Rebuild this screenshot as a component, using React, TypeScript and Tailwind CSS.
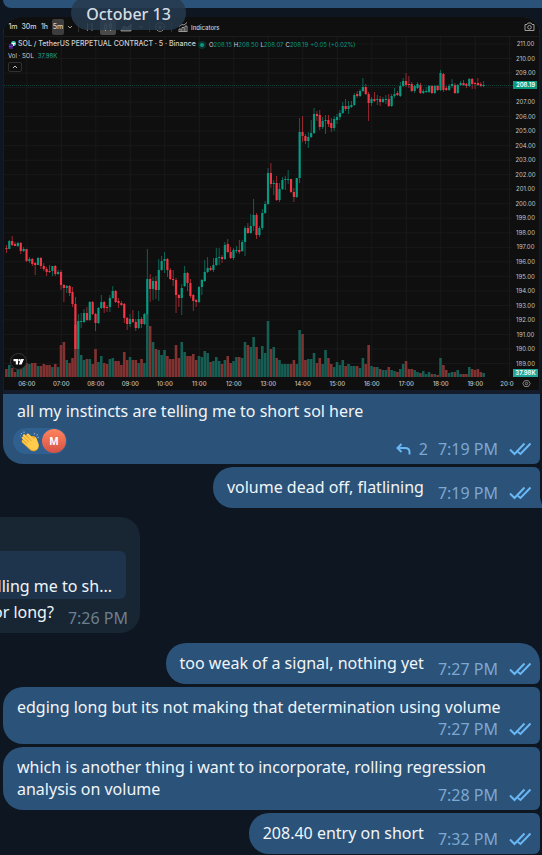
import type { ReactNode } from "react";

// Each candle: open, close, high, low (vertical chart coordinates), volume height.
type Candle = [number, number, number, number, number];

const CANDLES: Candle[] = [
  [248, 249, 245, 253, 8], [249, 241, 240, 249, 12], [241, 245, 236, 246, 9], [244, 246, 242, 246, 5],
  [246, 243, 242, 247, 8], [243, 251, 242, 254, 11], [251, 249, 247, 252, 12], [249, 261, 249, 262, 14],
  [261, 259, 257, 263, 13], [259, 264, 258, 266, 14], [263, 265, 262, 275, 14], [265, 258, 257, 265, 11],
  [258, 266, 257, 269, 11], [266, 269, 263, 271, 13], [269, 272, 267, 276, 12], [271, 272, 265, 273, 12],
  [271, 266, 266, 276, 10], [266, 274, 265, 276, 13], [274, 272, 270, 275, 10], [272, 285, 270, 290, 32],
  [285, 288, 284, 302, 35], [288, 286, 285, 293, 17], [286, 293, 285, 296, 14], [292, 304, 287, 307, 19],
  [304, 349, 297, 349, 52], [349, 321, 314, 349, 28], [322, 321, 313, 328, 22], [322, 313, 309, 323, 17],
  [313, 320, 307, 321, 18], [320, 302, 301, 321, 18], [302, 314, 301, 315, 13], [314, 323, 313, 331, 28],
  [323, 308, 307, 324, 15], [308, 302, 295, 309, 21], [302, 308, 301, 313, 14], [307, 308, 305, 312, 13],
  [307, 298, 295, 312, 18], [298, 291, 286, 299, 19], [291, 302, 290, 303, 16], [301, 303, 298, 308, 16],
  [303, 305, 301, 306, 12], [304, 318, 303, 323, 25], [318, 324, 317, 330, 17], [324, 319, 314, 327, 20],
  [319, 322, 310, 323, 17], [322, 328, 319, 331, 17], [328, 319, 311, 329, 14], [319, 324, 317, 328, 18],
  [324, 314, 313, 325, 14], [314, 279, 249, 315, 63], [279, 289, 274, 302, 51], [289, 281, 277, 300, 35],
  [281, 290, 276, 299, 28], [290, 270, 259, 301, 27], [270, 261, 256, 271, 22], [261, 259, 252, 273, 27],
  [259, 270, 258, 277, 21], [270, 279, 268, 280, 18], [279, 280, 270, 286, 18], [280, 295, 278, 313, 32],
  [295, 298, 294, 307, 19], [298, 288, 284, 315, 35], [286, 273, 266, 287, 25], [273, 283, 272, 291, 21],
  [283, 296, 279, 298, 21], [295, 301, 294, 311, 23], [300, 302, 299, 307, 17], [302, 287, 286, 303, 21],
  [287, 280, 279, 295, 20], [281, 272, 260, 282, 26], [272, 268, 257, 273, 24], [268, 270, 266, 271, 15],
  [270, 265, 258, 272, 16], [265, 258, 248, 266, 20], [258, 257, 248, 265, 16], [257, 259, 255, 263, 13],
  [259, 245, 242, 260, 17], [244, 252, 239, 253, 21], [252, 258, 247, 259, 14], [258, 250, 248, 260, 16],
  [251, 250, 246, 253, 20], [250, 252, 240, 254, 20], [251, 242, 240, 252, 19], [242, 228, 226, 256, 35],
  [228, 233, 223, 234, 32], [233, 226, 214, 234, 30], [226, 215, 199, 231, 40], [215, 235, 213, 239, 30],
  [235, 228, 226, 237, 18], [228, 213, 209, 230, 31], [213, 204, 201, 214, 24], [204, 173, 168, 205, 56],
  [173, 184, 163, 188, 28], [184, 183, 180, 195, 30], [183, 200, 176, 201, 19], [200, 189, 183, 202, 17],
  [189, 180, 177, 190, 13], [180, 179, 176, 190, 13], [180, 179, 170, 184, 13], [179, 192, 179, 193, 13],
  [192, 197, 188, 202, 17], [197, 178, 178, 198, 13], [178, 132, 118, 183, 47], [132, 136, 116, 142, 43],
  [136, 141, 134, 144, 17], [141, 137, 132, 148, 18], [137, 133, 120, 138, 18], [133, 114, 108, 134, 24],
  [114, 116, 111, 121, 14], [115, 127, 110, 130, 19], [127, 121, 117, 129, 13], [121, 120, 115, 134, 27],
  [120, 124, 115, 127, 19], [123, 128, 118, 132, 13], [128, 119, 116, 131, 10], [120, 117, 114, 124, 15],
  [117, 113, 110, 120, 12], [113, 106, 102, 114, 17], [106, 109, 99, 111, 11], [109, 106, 101, 114, 13],
  [107, 105, 101, 108, 11], [105, 95, 93, 106, 11], [94, 96, 91, 98, 11], [96, 91, 89, 97, 9],
  [91, 87, 78, 92, 19], [87, 94, 84, 95, 13], [94, 103, 92, 121, 32], [103, 99, 97, 106, 11],
  [99, 101, 92, 102, 10], [100, 99, 95, 105, 10], [99, 102, 96, 106, 8], [102, 99, 97, 103, 7],
  [100, 99, 95, 104, 7], [99, 106, 94, 107, 10], [106, 96, 94, 107, 7], [96, 94, 88, 98, 6],
  [93, 95, 91, 96, 5], [96, 86, 82, 97, 8], [86, 81, 78, 87, 13], [81, 85, 73, 87, 16],
  [84, 85, 76, 88, 8], [84, 91, 82, 92, 8], [91, 86, 85, 93, 7], [88, 84, 82, 89, 5],
  [85, 93, 83, 94, 4], [93, 91, 89, 94, 6], [92, 91, 87, 93, 3], [92, 86, 85, 93, 5],
  [86, 93, 85, 94, 3], [93, 86, 85, 94, 3], [86, 90, 85, 91, 2], [90, 73, 70, 91, 19],
  [74, 90, 73, 92, 12], [88, 90, 86, 91, 7], [90, 86, 84, 91, 4], [86, 84, 79, 88, 5],
  [85, 93, 83, 94, 5], [93, 85, 84, 94, 7], [85, 83, 81, 86, 3], [83, 85, 80, 86, 3],
  [84, 86, 83, 88, 3], [86, 79, 78, 87, 10], [79, 84, 78, 89, 8], [83, 84, 82, 89, 7],
  [83, 85, 78, 86, 8], [84, 86, 82, 87, 5], [86, 85, 81, 87, 4],
];

const HOURS = ["06:00", "07:00", "08:00", "09:00", "10:00", "11:00", "12:00", "13:00", "14:00", "15:00", "16:00", "17:00", "18:00", "19:00"];
const PRICES = Array.from({ length: 23 }, (_, i) => 211 - i);
const BASE = 377;

function Chart() {
  return (
    <svg viewBox="4 36 535 354" className="block w-full" role="img" aria-label="SOL perpetual price chart">
      <rect x="4" y="36" width="535" height="354" fill="#0f0f0f" />
      <g stroke="#191919" strokeWidth="1">
        <path d="M4 36.5H539" stroke="#1c1c1c" />
        {PRICES.map((p, i) => <path key={p} d={`M4 ${44 + i * 14.52}H512`} />)}
        {HOURS.map((h, i) => <path key={h} d={`M${26.8 + i * 34.5} 37V377`} />)}
        <path d="M509.5 37V377" />
      </g>
      {CANDLES.map(([open, close, high, low, vol], i) => {
        const x = 6.4 + i * 2.875;
        const up = close < open;
        return (
          <g key={i}>
            <rect x={x - 1.3} y={BASE - vol} width="2.6" height={vol} fill={up ? "#165e54" : "#833232"} />
            <rect x={x - 0.4} y={high} width="0.8" height={low - high} fill={up ? "#089981" : "#f23645"} opacity="0.75" />
            <rect x={x - 1.1} y={Math.min(open, close)} width="2.2" height={Math.abs(close - open)} fill={up ? "#089981" : "#f23645"} />
          </g>
        );
      })}
      <path d="M4 85.5H513" stroke="#089981" strokeWidth="1" strokeDasharray="1 1" opacity="0.35" />
      <g fill="#c2c2c2" fontSize="6" fontFamily="Inter, 'Liberation Sans', sans-serif" textAnchor="middle">
        {PRICES.map((p, i) => (p === 208 ? null : <text key={p} x="525.5" y={46.2 + i * 14.52}>{p}.00</text>))}
        <g fontWeight="500">
          {HOURS.map((h, i) => <text key={h} x={26.8 + i * 34.5} y="385.5">{h}</text>)}
          <text x="507" y="385.5">20:0</text>
        </g>
        <rect x="513" y="81" width="24" height="8" fill="#089981" />
        <text x="525.5" y="87.3" fill="#fff" fontWeight="600">208.19</text>
        <rect x="513" y="369" width="25" height="8" fill="#22a699" />
        <text x="525.5" y="375.2" fill="#fff" fontWeight="600">37.98K</text>
      </g>
      <g fill="none" stroke="#a0a0a0" strokeWidth="0.8">
        <path d="M524.6 380.7H528.4L530.2 383.5L528.4 386.5H524.6L522.8 383.5Z" />
        <circle cx="526.5" cy="383.6" r="1.2" />
      </g>
      <circle cx="18.5" cy="361.5" r="8" fill="#0f0f0f" stroke="#383838" />
      <path d="M13.5 359H18V364.5H15.8V361.2H13.5ZM20.8 359H24L21.6 364.5H18.8Z" fill="#fff" />
      <circle cx="19.4" cy="360.2" r="1.1" fill="#fff" />
    </svg>
  );
}

function Toolbar() {
  return (
    <div className="flex h-[19px] items-center bg-[#0f0f0f] pl-[3px] pr-[4px] pt-px font-['Inter','Liberation_Sans',sans-serif] text-[7px] font-medium text-[#d0d0d0]">
      <button className="w-[12px]">1m</button>
      <button className="ml-[2px] w-[16px]">30m</button>
      <button className="ml-[2px] w-[11px]">1h</button>
      <button className="ml-[2px] h-[16px] w-[12px] rounded-[2px] bg-[#3d3d3d]">5m</button>
      <button aria-label="More intervals" className="ml-[3px]">
        <svg width="6" height="6" viewBox="0 0 6 6" fill="none" stroke="#a0a0a0"><path d="M1 2L3 4L5 2" /></svg>
      </button>
      <span className="ml-[5px] h-[10px] w-px bg-[#303030]" />
      <button aria-label="Bars" className="ml-[6px]">
        <svg width="10" height="10" viewBox="0 0 10 10" fill="none" stroke="#808080"><path d="M2.5 1V9M1 7H2.5M2.5 3H4M7 1V9M5.5 3H7M7 7H8.500" /></svg>
      </button>
      <button aria-label="Candles" className="ml-[5px] flex h-[15px] w-[16px] items-center justify-center rounded-[2px] bg-[#4a4a4a]">
        <svg width="10" height="10" viewBox="0 0 10 10" fill="none" stroke="#a0a0a0"><path d="M1.500 3H3.500V7H1.500ZM2.500 1V3M2.500 7V9M6.500 2H8.500V6H6.500ZM7.500 0V2M7.500 6V9" /></svg>
      </button>
      <button aria-label="Area" className="ml-[4px]">
        <svg width="12" height="10" viewBox="0 0 12 10" fill="#666" stroke="#888"><path d="M1 8L4 4L7 6L11 2V9H1Z" /></svg>
      </button>
      <button aria-label="More styles" className="ml-[6px]">
        <svg width="6" height="6" viewBox="0 0 6 6" fill="none" stroke="#808080"><path d="M1 2L3 4L5 2" /></svg>
      </button>
      <span className="ml-[5px] h-[10px] w-px bg-[#303030]" />
      <button aria-label="Compare" className="ml-[5px]">
        <svg width="10" height="10" viewBox="0 0 10 10" fill="none" stroke="#999" strokeWidth="0.8"><circle cx="5" cy="5" r="4.400" /><path d="M5 2.500V7.500M2.500 5H7.500" /></svg>
      </button>
      <span className="ml-[6px] h-[10px] w-px bg-[#303030]" />
      <button className="ml-[6px] flex items-center gap-[3px]">
        <svg width="10" height="10" viewBox="0 0 10 10" fill="none" stroke="#bbb" strokeWidth="0.8"><path d="M1 9V7H3V9M4 9V5.500H6V9M7 9V4H9V9M0.500 9.500H9.500M1 4.500L4 2.500L6 3L9 0.500" /></svg>
        <span className="text-[6px]">Indicators</span>
      </button>
      <button aria-label="Take a snapshot" className="ml-auto">
        <svg width="11" height="10" viewBox="0 0 11 10" fill="none" stroke="#aaa" strokeWidth="0.9"><path d="M1 2.500H3L4 1H7L8 2.500H10V8.500H1Z" /><circle cx="5.500" cy="5.300" r="1.800" /></svg>
      </button>
    </div>
  );
}

function Legend() {
  return (
    <div className="absolute left-[5px] top-[23px] font-['Inter','Liberation_Sans',sans-serif] text-[#d0d0d0]">
      <div className="flex h-[9px] items-center whitespace-nowrap text-[6px]">
        <svg width="8" height="8" viewBox="0 0 8 8"><circle cx="5.500" cy="2.500" r="2.500" fill="#4fd1c5" /><path d="M4 2H7V3H6V5H5V3H4Z" fill="#fff" /><circle cx="2.800" cy="5.300" r="2.500" fill="#18103a" /><path d="M1 4H5M1 5.500H5M1 7H5" stroke="#9945ff" strokeWidth="0.7" /></svg>
        <span className="ml-[2px] text-[7px] font-medium">SOL / TetherUS PERPETUAL CONTRACT · 5 · Binance</span>
        <span className="ml-[2px] flex size-[8px] items-center justify-center rounded-full bg-[#0b332c]"><span className="size-[4px] rounded-full bg-[#089981]" /></span>
        <span className="ml-[3px]">O<span className="text-[#089981]">208.15</span></span>
        <span className="ml-[2px]">H<span className="text-[#089981]">208.50</span></span>
        <span className="ml-[2px]">L<span className="text-[#089981]">208.07</span></span>
        <span className="ml-[2px]">C<span className="text-[#089981]">208.19</span></span>
        <span className="ml-[2px] text-[#089981]">+0.05 (+0.02%)</span>
      </div>
      <div className="mt-[2px] flex h-[8px] items-center gap-[4px] text-[6px]">
        Vol · SOL <span className="text-[#22a699]">37.98K</span>
      </div>
      <button aria-label="Collapse legend" className="mt-[3px] flex h-[10px] w-[14px] items-center justify-center rounded-[2px] border border-[#303030]">
        <svg width="6" height="6" viewBox="0 0 6 6" fill="none" stroke="#c0c0c0"><path d="M1 4L3 2L5 4" /></svg>
      </button>
    </div>
  );
}

function Checks() {
  return (
    <svg width="22" height="14" viewBox="0 0 22 14" fill="none" stroke="#6ab7f5" strokeWidth="2" aria-label="Read">
      <path d="M1 7.500L5.500 12L15.500 1.500M9 10L11.500 12L21.500 1.500" />
    </svg>
  );
}

function Meta({ time, replies }: { time: string; replies?: number }) {
  return (
    <span className="ml-auto flex shrink-0 items-center pb-1 leading-[22px] text-[#7da8d3]">
      {replies !== undefined && (
        <span className="mr-[10px] flex items-center gap-[8px]">
          <svg width="15" height="12" viewBox="0 0 15 12" fill="none" stroke="#6ab7f5" strokeWidth="2"><path d="M5.500 1L1.500 5L5.500 9M1.500 5H9C12 5 13.500 6.500 13.500 9V11.500" /></svg>
          {replies}
        </span>
      )}
      <time>{time}</time>
      <span className="ml-[11px]"><Checks /></span>
    </span>
  );
}

type OutgoingProps = { children: ReactNode; time: string; shape: string; layout?: "beside" | "below" | "float" };

// "beside" puts the time after the text, "below" on its own line,
// "float" lets it share the last line of a wrapped text.
function Outgoing({ children, time, shape, layout = "beside" }: OutgoingProps) {
  const bubble = "relative max-w-full self-end bg-[#2b5278] pl-[14px] pr-[9px]";
  if (layout === "float") {
    return (
      <div className={`${bubble} w-full ${shape}`}>
        <p className="flow-root pt-[9px] leading-[22px]">
          {children}
          <span className="float-right mt-[6px]"><Meta time={time} /></span>
        </p>
      </div>
    );
  }
  if (layout === "below") {
    return (
      <div className={`${bubble} w-full ${shape}`}>
        <p className="pt-[9px] leading-[22px]">{children}</p>
        <div className="flex"><Meta time={time} /></div>
      </div>
    );
  }
  return (
    <div className={`${bubble} flex items-end gap-[14px] ${shape}`}>
      <p className="pb-[10px] pt-[9px] leading-[22px]">{children}</p>
      <Meta time={time} />
    </div>
  );
}

function ClapEmoji() {
  return (
    <svg width="20" height="21" viewBox="0 0 20 21" role="img" aria-label="Clapping hands">
      <path d="M3 8.500L6 4.500C7 3.500 8.500 4.500 8 6L13 5C15 5 16 6 16.500 8L18.500 13C19.500 16 18 19 15 20C12 21 10 19 8 17L2 11.500C1.500 10 2 9 3 8.500Z" fill="#f5a623" />
      <path d="M1.500 7C2 5.500 3 5.500 4 6.200L2.800 4.800C2.500 3.300 4.300 2.700 5.200 3.700L9.500 7.500L6.500 3.800C6.500 2.300 8 2 9 3L14.500 8.500C14 6.500 15.500 5.500 16.300 7L18 11.500C19.300 15 18 18 15.500 19C13 20 10.500 18.500 8.500 16.500L2.500 11C1.300 9.800 1.500 9 3 9.200L5.500 11L1.500 7Z" fill="#ffcb4c" />
      <path d="M4 6.200L9 11M6 4.500L11.500 10M2.800 9.200L7.500 13" stroke="#d98b22" strokeWidth="0.7" fill="none" />
      <path d="M2 3L1 2M4 2L4 0.500M1 5L0.300 4.800M14 3.500L15 2M16.500 4.500L18 3.500M17.500 6.500L19 6.300" stroke="#9fb6c8" strokeWidth="1" fill="none" />
    </svg>
  );
}

export default function App() {
  return (
    <main className="relative flex min-h-screen w-full flex-col overflow-hidden bg-[#0e1621] pl-[3px] pr-[2px] font-['Noto_Sans','Open_Sans',sans-serif] text-[16px] text-[#f0f5f9]">
      <div className="-mr-[2px] h-[8px] rounded-bl-[20px] bg-[#2b5278]" />

      <article className="mt-[9px] overflow-hidden rounded-b-[20px] rounded-t-[18px] rounded-br-[6px] bg-[#2b5278]">
        <div className="relative bg-[#151c2b] px-px pb-[4px]">
          <Toolbar />
          <Chart />
          <Legend />
        </div>
        <p className="pl-[14px] pt-[6px] leading-[22px]">all my instincts are telling me to short sol here</p>
        <div className="flex items-end pl-[10px] pr-[9px]">
          <button className="mb-[10px] mt-[6px] flex h-[26px] items-center gap-[2px] rounded-full bg-[#2f608f] pl-[7px] pr-px">
            <ClapEmoji />
            <span className="flex size-[24px] items-center justify-center rounded-full bg-linear-to-b from-[#ff845e] to-[#d45246] text-[10px] font-bold text-white">M</span>
          </button>
          <Meta time="7:19 PM" replies={2} />
        </div>
      </article>

      <div className="mt-[3px] flex flex-col">
        <Outgoing time="7:19 PM" shape="rounded-l-[20px] rounded-tr-[6px]">
          volume dead off, flatlining
          <svg className="absolute -right-[2px] bottom-0" width="2" height="10" viewBox="0 0 2 10" aria-hidden="true"><path d="M0 0L2 7V10H0Z" fill="#2b5278" /></svg>
        </Outgoing>
      </div>

      <article className="-ml-[3px] mt-[9px] w-[140px] rounded-r-[20px] bg-[#182533] pt-[34px]">
        <blockquote className="mr-[14px] flex h-[48px] items-end justify-end whitespace-nowrap rounded-r-[6px] bg-[#1e344c] pb-[2px] pr-[14px] leading-[22px]">
          lling me to sh...
        </blockquote>
        <div className="flex items-end justify-end gap-[14px] whitespace-nowrap pr-[12px]">
          <p className="pb-[10px] pt-[2px] leading-[22px]">or long?</p>
          <time className="pb-1 leading-[22px] text-[#6d7f8f]">7:26 PM</time>
        </div>
      </article>

      <section className="mt-[10px] flex flex-col gap-[3px]">
        <Outgoing time="7:27 PM" shape="rounded-[20px] rounded-br-[6px]">too weak of a signal, nothing yet</Outgoing>
        <Outgoing time="7:27 PM" shape="rounded-l-[20px] rounded-r-[6px]" layout="below">edging long but its not making that determination using volume</Outgoing>
        <Outgoing time="7:28 PM" shape="rounded-l-[20px] rounded-r-[6px]" layout="float">which is another thing i want to incorporate, rolling regression analysis on volume</Outgoing>
        <Outgoing time="7:32 PM" shape="rounded-l-[20px] rounded-r-[6px]">208.40 entry on short</Outgoing>
      </section>

      <div className="absolute left-[71px] -top-[4px] flex h-[34px] w-[115px] items-center justify-center rounded-full bg-[#263a4d]/85 pt-[2px] font-medium text-[#d5dde4]">October 13</div>
    </main>
  );
}
